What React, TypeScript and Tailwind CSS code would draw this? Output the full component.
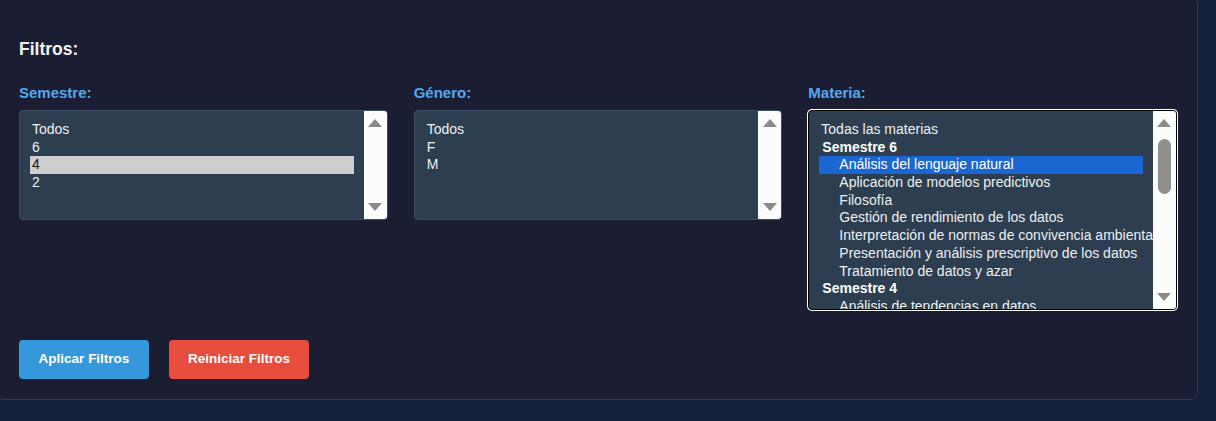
import React from "react";

type Row = { text: string; kind?: "group" | "item" | "plain"; sel?: "gray" | "blue" };

function Arrow({ up }: { up: boolean }) {
  return (
    <svg width="14" height="8" viewBox="0 0 14 8" className="block">
      {up ? <polygon points="0,8 14,8 7,0" fill="#8a8a8a" /> : <polygon points="0,0 14,0 7,8" fill="#8a8a8a" />}
    </svg>
  );
}

function ScrollBar({ thumb }: { thumb?: boolean }) {
  return (
    <div className="w-[23px] shrink-0 bg-[#fcfcfc] flex flex-col items-center py-[8px]">
      <Arrow up />
      {thumb ? <div className="mt-[12px] w-[13px] h-[55px] rounded-full bg-[#8f8f8f]" /> : null}
      <div className="flex-1" />
      <Arrow up={false} />
    </div>
  );
}

function ListBox({ rows, focused, thumb }: { rows: Row[]; focused?: boolean; thumb?: boolean }) {
  return (
    <div
      className={
        focused
          ? "flex overflow-hidden rounded-[4px] border border-black ring-1 ring-white bg-[#2c3e50] h-[200px]"
          : "flex overflow-hidden rounded-[4px] border border-[#3a4d62] bg-[#2c3e50] h-[110px]"
      }
    >
      <div className="flex-1 min-w-0 overflow-hidden p-[10px]">
        {rows.map((r, i) => {
          let cls = "h-[17.7px] leading-[17.7px] whitespace-nowrap text-[14px] ";
          if (r.kind === "group") cls += "pl-[3px] font-bold text-[#ffffff] ";
          else if (r.kind === "item") cls += "pl-[20px] ";
          else cls += "pl-[2px] ";
          if (r.sel === "gray") cls += "bg-[#cecece] text-[#111111]";
          else if (r.sel === "blue") cls += "bg-[#1a67d4] text-white";
          else if (r.kind !== "group") cls += "text-[#ecf0f1]";
          return (
            <div key={i} className={cls}>
              {r.text}
            </div>
          );
        })}
      </div>
      <ScrollBar thumb={thumb} />
    </div>
  );
}

export default function App() {
  const semestre: Row[] = [{ text: "Todos" }, { text: "6" }, { text: "4", sel: "gray" }, { text: "2" }];
  const genero: Row[] = [{ text: "Todos" }, { text: "F" }, { text: "M" }];
  const materia: Row[] = [
    { text: "Todas las materias" },
    { text: "Semestre 6", kind: "group" },
    { text: "Análisis del lenguaje natural", kind: "item", sel: "blue" },
    { text: "Aplicación de modelos predictivos", kind: "item" },
    { text: "Filosofía", kind: "item" },
    { text: "Gestión de rendimiento de los datos", kind: "item" },
    { text: "Interpretación de normas de convivencia ambiental", kind: "item" },
    { text: "Presentación y análisis prescriptivo de los datos", kind: "item" },
    { text: "Tratamiento de datos y azar", kind: "item" },
    { text: "Semestre 4", kind: "group" },
    { text: "Análisis de tendencias en datos", kind: "item" },
  ];

  const label = "text-[15px] leading-[18px] font-bold text-[#52a9f2] mb-[8px]";

  return (
    <div className="h-[421px] overflow-hidden bg-[#16213e]" style={{ fontFamily: '"Liberation Sans", Arial, sans-serif' }}>
      <div className="ml-[-4px] mt-[-5px] w-[1202px] rounded-[8px] border border-[#2b3a55] bg-[#1b1e33] pl-[22px] pr-[20px] pt-[43px] pb-[20px]">
        <h3 className="text-[17.5px] leading-[20px] font-bold text-[#f2f4f5]">Filtros:</h3>
        <div className="mt-[25px] grid grid-cols-3 gap-[26px] items-start">
          <div>
            <div className={label}>Semestre:</div>
            <ListBox rows={semestre} />
          </div>
          <div>
            <div className={label}>Género:</div>
            <ListBox rows={genero} />
          </div>
          <div>
            <div className={label}>Materia:</div>
            <ListBox rows={materia} focused thumb />
          </div>
        </div>
        <div className="mt-[30px] flex gap-[20px]">
          <button className="w-[130px] h-[39px] rounded-[4px] bg-[#3498db] text-white text-[13.5px] font-bold">
            Aplicar Filtros
          </button>
          <button className="w-[140px] h-[39px] rounded-[4px] bg-[#e74c3c] text-white text-[13.5px] font-bold">
            Reiniciar Filtros
          </button>
        </div>
      </div>
    </div>
  );
}
